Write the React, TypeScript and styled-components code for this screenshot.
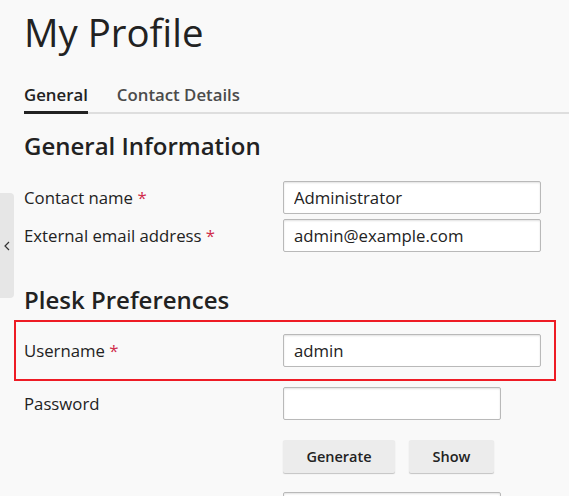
import styled, { createGlobalStyle } from "styled-components";

const GlobalStyle = createGlobalStyle`
  html, body {
    margin: 0;
    padding: 0;
    background: #f9f9f9;
  }
  body {
    font-family: "Open Sans", "Liberation Sans", sans-serif;
    color: #222;
  }
`;

const Page = styled.div`
  position: relative;
  height: 496px;
  padding-left: 24px;
  overflow: hidden;
`;

const SideToggle = styled.button`
  position: absolute;
  left: 0;
  top: 193px;
  width: 14px;
  height: 105px;
  padding: 0;
  border: none;
  border-radius: 0 4px 4px 0;
  background: #e6e6e6;
  display: flex;
  align-items: center;
  justify-content: center;
  cursor: pointer;
`;

const Title = styled.h1`
  margin: 8px 0 0;
  font-size: 38.4px;
  line-height: 48px;
  font-weight: 400;
  color: #222;
`;

const TabList = styled.div`
  display: flex;
  gap: 29px;
  margin-top: 27px;
  border-bottom: 2px solid #dedede;
`;

const Tab = styled.div<{ $active?: boolean }>`
  font-size: 16.8px;
  line-height: 24px;
  font-weight: 600;
  color: ${(p) => (p.$active ? "#222" : "#4b4b4b")};
  padding-bottom: 4px;
  margin-bottom: -2px;
  border-bottom: 3px solid ${(p) => (p.$active ? "#222" : "transparent")};
  cursor: pointer;
`;

const SectionTitle = styled.h2<{ $top: number }>`
  margin: ${(p) => p.$top}px 0 0;
  font-size: 24px;
  line-height: 30px;
  font-weight: 600;
  color: #222;
`;

const Fields = styled.div<{ $top: number }>`
  display: flex;
  flex-direction: column;
  gap: 5px;
  margin-top: ${(p) => p.$top}px;
`;

const Row = styled.div`
  display: grid;
  grid-template-columns: 259px auto;
  align-items: center;
`;

const Highlight = styled.div`
  width: fit-content;
  margin-left: -10px;
  padding: 12px 13px 12px 8px;
  border: 2px solid #ee1c25;
  margin-bottom: 1px;
`;

const Label = styled.label`
  font-size: 16.75px;
  line-height: 22px;
  color: #222;
`;

const Required = styled.span`
  color: #d02d4b;
`;

const Input = styled.input<{ $w: number }>`
  box-sizing: border-box;
  width: ${(p) => p.$w}px;
  height: 33px;
  padding: 0 10px;
  border: 1px solid #b9b9b9;
  border-radius: 2px;
  background: #fff;
  box-shadow: inset 0 1px 2px rgba(0, 0, 0, 0.12);
  font-family: "Open Sans", "Liberation Sans", sans-serif;
  font-size: 16.75px;
  color: #222;
  outline: none;
`;

const ButtonRow = styled.div`
  display: flex;
  gap: 14px;
  margin: 20px 0 19px 259px;
`;

const Button = styled.button<{ $w: number }>`
  width: ${(p) => p.$w}px;
  height: 33px;
  border: none;
  border-radius: 2px;
  background: #ececec;
  box-shadow: 0 1px 1px rgba(0, 0, 0, 0.22);
  font-family: "Open Sans", "Liberation Sans", sans-serif;
  font-size: 14.5px;
  font-weight: 600;
  color: #222;
  cursor: pointer;
`;

const FieldLine = styled.div`
  padding-left: 259px;
`;

export default function App() {
  return (
    <>
      <GlobalStyle />
      <Page>
        <SideToggle aria-label="Collapse">
          <svg width="6" height="10" viewBox="0 0 6 10">
            <polyline
              points="5,1 1,5 5,9"
              fill="none"
              stroke="#333"
              strokeWidth="1.2"
            />
          </svg>
        </SideToggle>
        <Title>My Profile</Title>
        <TabList>
          <Tab $active>General</Tab>
          <Tab>Contact Details</Tab>
        </TabList>

        <SectionTitle $top={17}>General Information</SectionTitle>
        <Fields $top={20}>
          <Row>
            <Label>
              Contact name <Required>*</Required>
            </Label>
            <Input $w={258} defaultValue="Administrator" />
          </Row>
          <Row>
            <Label>
              External email address <Required>*</Required>
            </Label>
            <Input $w={258} defaultValue="admin@example.com" />
          </Row>
        </Fields>

        <SectionTitle $top={33}>Plesk Preferences</SectionTitle>
        <Fields $top={5}>
          <Highlight>
            <Row>
              <Label>
                Username <Required>*</Required>
              </Label>
              <Input $w={258} defaultValue="admin" />
            </Row>
          </Highlight>
          <Row>
            <Label>Password</Label>
            <Input $w={218} type="password" />
          </Row>
        </Fields>
        <ButtonRow>
          <Button $w={112}>Generate</Button>
          <Button $w={85}>Show</Button>
        </ButtonRow>
        <FieldLine>
          <Input $w={218} type="password" />
        </FieldLine>
      </Page>
    </>
  );
}
